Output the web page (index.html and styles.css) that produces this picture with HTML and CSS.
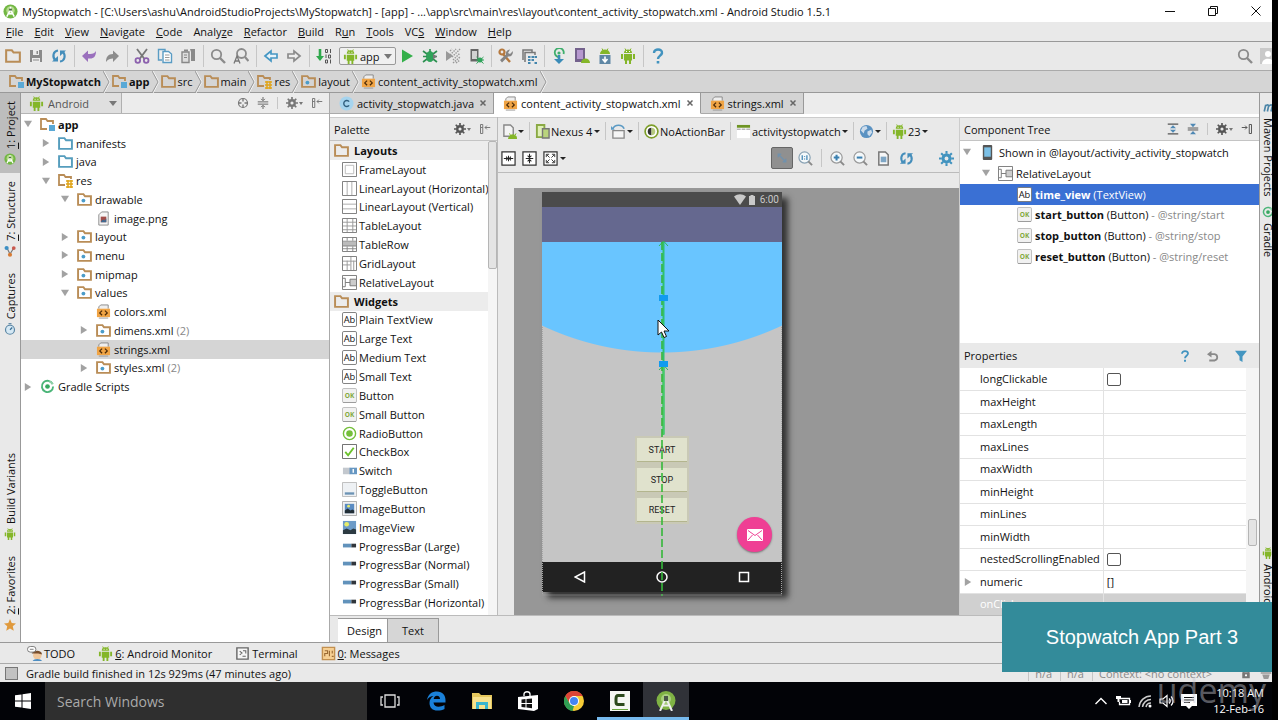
FILE: index.html
```
<!DOCTYPE html>
<html lang="en">
<head>
  <meta charset="UTF-8" />
  <meta name="viewport" content="width=device-width, initial-scale=1.0"/>
  <title>MyStopwatch - Android Studio 1.5.1</title>
  <link rel="stylesheet" href="styles.css">
</head>
<body>
  <!-- icon sprite -->
  <svg class="sprite" aria-hidden="true">
    <symbol id="folder" viewBox="1 1 14 14"><path d="M2 13V3h5l1.500 2H14v8z" fill="none" stroke="#b98d57" stroke-width="1.800"/></symbol>
    <symbol id="folder-blue" viewBox="1 1 14 14"><path d="M2 13V3h5l1.500 2H14v8z" fill="none" stroke="#559dbd" stroke-width="1.800"/></symbol>
    <symbol id="folder-mod" viewBox="1 1 15 15"><path d="M8 13H2V3h5l1.500 2H14v3" fill="none" stroke="#b98d57" stroke-width="1.800"/><path d="M10 9h6v6h-6z" fill="#5aa9d6"/></symbol>
    <symbol id="folder-res" viewBox="1 1 15 15"><path d="M8 13H2V3h5l1.500 2H14v2" fill="none" stroke="#b98d57" stroke-width="1.800"/><path d="M9 9h7M9 12h7M9 15h7M11 8v8M14 8v8" stroke="#e0a419" stroke-width="1.500"/></symbol>
    <symbol id="folder-pkg" viewBox="1 1 14 14"><path d="M2 13V3h5l1.500 2H14v8z" fill="none" stroke="#b98d57" stroke-width="1.800"/><circle cx="7" cy="9" r="1.800" fill="#4b9cc9"/></symbol>
    <symbol id="xml" viewBox="0 0 16 16"><path d="M3 5V3l2-2h8v4" fill="#eee" stroke="#888"/><path d="M1 5h14v9H1z" fill="#f0a445"/><path d="M6.500 7L4 9.500 6.500 12M9.500 7L12 9.500 9.500 12" fill="none" stroke="#4b2a08" stroke-width="1.300"/><path d="M3 15h10" stroke="#999"/></symbol>
    <symbol id="image-file" viewBox="0 0 16 16"><path d="M3 4l3-3h7v14H3z" fill="#f6f6f6" stroke="#8a8a8a"/><path d="M5 6h6v6H5z" fill="#a34e4a"/><path d="M5 12l2-3 2 1 2-2v4z" fill="#3f6a91"/></symbol>
    <symbol id="gradle" viewBox="0 0 16 16"><path d="M13.500 5.500A6 6 0 1 0 14 8" fill="none" stroke="#4bb578" stroke-width="2"/><circle cx="8" cy="8" r="2.500" fill="#36a85f"/><path d="M10 2.500a6 6 0 0 1 3.500 3" fill="none" stroke="#8fd0a8" stroke-width="2"/></symbol>
    <symbol id="android" viewBox="0 0 16 16"><g fill="#84b629"><path d="M4 5a4 3.600 0 0 1 8 0zM4 6h8v6.500H4zM1 6h2v5H1zM13 6h2v5h-2zM5 12h2v4H5zM9 12h2v4H9z"/></g><path d="M5 .5l1 2M11 .5l-1 2" stroke="#84b629"/><path d="M6 3.500h1M9 3.500h1" stroke="#fff"/></symbol>
    <symbol id="studio" viewBox="0 0 16 16"><circle cx="8" cy="8" r="7.500" fill="#72b743"/><circle cx="8" cy="7" r="4.500" fill="#b5dc8c"/><path d="M8 3v3M4 13.500L8 6l4 7.500M5.500 10.500h5" stroke="#fff" stroke-width="1.600" fill="none"/><path d="M6.500 5h3v2h-3z" fill="#4c6b42"/></symbol>
    <symbol id="gear" viewBox="0 0 16 16"><circle cx="8" cy="8" r="3.700" fill="none" stroke="currentColor" stroke-width="3.200"/><path d="M8 0v3M8 13v3M0 8h3M13 8h3M2.300 2.300l2.200 2.200M11.500 11.500l2.200 2.200M13.700 2.300l-2.200 2.200M4.500 11.500l-2.200 2.200" stroke="currentColor" stroke-width="2.200"/></symbol>
    <symbol id="hide-left" viewBox="0 0 16 16"><path d="M2 2h3v12H2zM2 6h3" fill="none" stroke="#777" stroke-width="1.300"/><path d="M15 6H8M10.500 3.500L8 6l2.500 2.500" fill="none" stroke="#777" stroke-width="1.300"/></symbol>
    <symbol id="hide-right" viewBox="0 0 16 16"><path d="M11 2h3v12h-3z" fill="none" stroke="#555" stroke-width="1.300"/><path d="M1 6h7M5.500 3.500L8 6 5.500 8.500" fill="none" stroke="#555" stroke-width="1.300"/></symbol>
    <symbol id="target" viewBox="0 0 16 16"><circle cx="8" cy="8" r="6" fill="none" stroke="#777" stroke-width="1.600"/><path d="M8 2v4M8 10v4M2 8h4M10 8h4" stroke="#777" stroke-width="1.800"/></symbol>
    <symbol id="collapse" viewBox="0 0 16 16"><path d="M1 6.500h14M1 9.500h14" stroke="#666" stroke-width="1.300"/><path d="M8 0v4M8 12v4M5.500 2.500L8 5l2.500-2.500M5.500 13.500L8 11l2.500 2.500" fill="none" stroke="#666" stroke-width="1.300"/></symbol>
    <symbol id="expand-b" viewBox="0 0 16 16"><path d="M1 1.500h14M1 14.500h14" stroke="#555" stroke-width="1.500"/><path d="M4 7l4-4 4 4zM4 9l4 4 4-4z" fill="#4f89b5"/></symbol>
    <symbol id="collapse-b" viewBox="0 0 16 16"><path d="M1 6.700h14M1 9.300h14" stroke="#555" stroke-width="1.300"/><path d="M4 1h8L8 5.500zM4 15h8l-4-4.500z" fill="#4f89b5"/></symbol>
    <symbol id="save" viewBox="0 0 16 16"><path d="M2 2h12v12H2z" fill="#8a8a8a"/><path d="M5 2h6v5H5zM4 10h8v4H4z" fill="#ececec"/><path d="M8.500 3h1.500v3H8.500zM5 11.500h6v1H5z" fill="#8a8a8a"/></symbol>
    <symbol id="sync" viewBox="0 0 16 16"><path d="M7 2.500C2 3 1 9 4.500 12.500M9 13.500C14 13 15 7 11.500 3.500" fill="none" stroke="#458ebb" stroke-width="2.200"/><path d="M1 13.500h6V8zM15 2.500H9V8z" fill="#458ebb"/></symbol>
    <symbol id="undo" viewBox="0 0 16 16"><path d="M1 8l6-5.500V6h2c3 0 5-1 6-3 0 5-2 7.500-6 7.500H7V14z" fill="#9a70bd"/></symbol>
    <symbol id="redo" viewBox="0 0 16 16"><path d="M15 8L9 2.500V6C4 6 2 9 2 14c2-3 4-3.500 7-3.500V14z" fill="#8c8c8c"/></symbol>
    <symbol id="cut" viewBox="0 0 16 16"><path d="M3 1l7.500 10M13 1L5.500 11" stroke="#777" stroke-width="1.800"/><circle cx="3.800" cy="12.500" r="2.300" fill="none" stroke="#8c61ae" stroke-width="1.800"/><circle cx="12.200" cy="12.500" r="2.300" fill="none" stroke="#8c61ae" stroke-width="1.800"/></symbol>
    <symbol id="copy" viewBox="0 0 16 16"><path d="M5 12H1.500V1.500H8V3" fill="#eee" stroke="#5a9cc4" stroke-width="1.400"/><path d="M6 3.500h5.500L14.500 6v8.500H6z" fill="#fff" stroke="#5a9cc4" stroke-width="1.400"/><path d="M8 7h4.500M8 9.500h4.500M8 12h4.500" stroke="#999"/></symbol>
    <symbol id="paste" viewBox="0 0 16 16"><path d="M2 4h7v10.500H2z" fill="#ddd" stroke="#888" stroke-width="1.400"/><path d="M4 1.500h4v2H4zM10 1h5v12h-4V4z" fill="#8a8a8a"/><path d="M4 7h3M4 9.500h3" stroke="#888"/></symbol>
    <symbol id="find" viewBox="0 0 16 16"><circle cx="6.500" cy="6.500" r="4.700" fill="none" stroke="#8b8b8b" stroke-width="1.800"/><path d="M10 10l5 5" stroke="#8b8b8b" stroke-width="2.400"/></symbol>
    <symbol id="replace" viewBox="0 0 16 16"><circle cx="8.500" cy="5.500" r="4.500" fill="none" stroke="#8b8b8b" stroke-width="1.800"/><path d="M12 9l3.500 4" stroke="#8b8b8b" stroke-width="2.200"/><path d="M1 15.500l3-7.500 3 7.500M2 13h4" fill="none" stroke="#777" stroke-width="1.300"/></symbol>
    <symbol id="arrow-back" viewBox="0 0 16 16"><path d="M2 8l6-5v3h6v4H8v3z" fill="#e7f3fa" stroke="#4597c4" stroke-width="1.700"/></symbol>
    <symbol id="arrow-fwd" viewBox="0 0 16 16"><path d="M14 8L8 3v3H2v4h6v3z" fill="#eee" stroke="#8b8b8b" stroke-width="1.700"/></symbol>
    <symbol id="make" viewBox="0 0 16 16"><path d="M4 1v9" stroke="#2fa84c" stroke-width="2.600"/><path d="M0 8h8l-4 5z" fill="#2fa84c"/><path d="M9.500 1.500h2v3h-2zM14.500 1v4M10 6.500v3.500M12.500 7h2v3h-2zM9.500 12h2v3h-2zM14.500 11.500v4" fill="none" stroke="#555"/></symbol>
    <symbol id="run" viewBox="0 0 16 16"><path d="M3 1.500L14 8 3 14.500z" fill="#34b04a"/></symbol>
    <symbol id="bug" viewBox="0 0 16 16"><ellipse cx="8" cy="8.500" rx="4" ry="5.500" fill="#2fa35a"/><path d="M1 3l4 3M1 8.500h4M1 14l4-3M15 3l-4 3M15 8.500h-4M15 14l-4-3M8 1v3" stroke="#2d8f51" stroke-width="1.600"/><path d="M11 6l4 2.500-4 3z" fill="#777"/></symbol>
    <symbol id="coverage" viewBox="0 0 16 16"><path d="M1 3l7 5-7 5z" fill="#999"/><path d="M5 3l2-2M5 7l6-6M7 9l8-8M8 12l7-7M8 15l7-6M11 15l4-3" stroke="#999" stroke-width="1.400" stroke-dasharray="1.500 1"/></symbol>
    <symbol id="attach" viewBox="0 0 16 16"><path d="M2.500 1h8v12.500h-8z" fill="#666"/><path d="M4 3h5v8H4z" fill="#d2d2d2"/><circle cx="12" cy="12" r="2.500" fill="#2fa35a"/><path d="M8.500 9l7 6.500M15.500 9l-7 6.500M8 12h8" stroke="#2fa35a"/></symbol>
    <symbol id="wrench" viewBox="0 0 16 16"><circle cx="4" cy="4" r="2.500" fill="none" stroke="#b5793e" stroke-width="2.200"/><path d="M5 6l7 8" stroke="#b5793e" stroke-width="2.400"/><path d="M15 3l-3 3-2-1 2-3.500a4 4 0 0 0-4 5L2 12l2 2.500 6-6c3 .5 5-1.500 5-5.500z" fill="#858585"/></symbol>
    <symbol id="structure" viewBox="0 0 16 16"><path d="M2 12V2h9v2M4 14V4.500h10V7" fill="none" stroke="#777" stroke-width="1.500"/><path d="M7 8h2.500v2H7zM10.500 8H13v2h-2.500zM7 11h2.500v2H7zM10.500 11H13v2h-2.500zM7 14h2.500v2H7zM13.500 14H16v2h-2.500zM13.500 8H16v2h-2.500z" fill="#4486ad"/></symbol>
    <symbol id="gradle-sync" viewBox="0 0 16 16"><path d="M12.500 6A4.500 4.500 0 1 0 9 9" fill="none" stroke="#3fae6c" stroke-width="1.800"/><circle cx="8" cy="5" r="1.600" fill="#3fae6c"/><path d="M8 7v6" stroke="#3b8cb8" stroke-width="2.600"/><path d="M3 11h10l-5 5z" fill="#3b8cb8"/></symbol>
    <symbol id="avd" viewBox="0 0 16 16"><path d="M1 0h10v14H1z" fill="#74628d"/><path d="M3 2h6v9H3z" fill="#b698cf"/><path d="M7 15a4.500 4.500 0 0 1 9 0z" fill="#84b629"/></symbol>
    <symbol id="sdk" viewBox="0 0 16 16"><path d="M3 6a5 4.500 0 0 1 10 0z" fill="#84b629"/><path d="M2.500 7h11v9h-11z" fill="#5f87a5"/><path d="M8 8.500v4M5.500 11L8 14l2.500-3" fill="none" stroke="#fff" stroke-width="1.600"/><path d="M5 .5l1 2M11 .5l-1 2" stroke="#84b629"/></symbol>
    <symbol id="help" viewBox="0 0 16 16"><path d="M4 5c0-5 8.500-4.500 8 0-.3 2.500-4 3-4 6" fill="none" stroke="#4293bf" stroke-width="2.400"/><path d="M6.700 13h2.600v2.500H6.700z" fill="#4293bf"/></symbol>
    <symbol id="user" viewBox="0 0 16 16"><path d="M0 0h16v16H0z" fill="#c9c9c9"/><circle cx="8" cy="6" r="3" fill="#fff"/><path d="M2 16c0-7 12-7 12 0z" fill="#fff"/></symbol>
    <symbol id="class" viewBox="0 0 16 16"><circle cx="8" cy="8" r="7.500" fill="#a6d4ee"/><path d="M10.800 6A3.200 3.200 0 1 0 10.800 10" fill="none" stroke="#31607f" stroke-width="1.500"/></symbol>
    <symbol id="close" viewBox="0 0 16 16"><path d="M3 3l10 10M13 3L3 13" stroke="#666" stroke-width="3"/></symbol>
    <symbol id="frame" viewBox="0 0 16 16"><path d="M.5.500h15v15H.5z" fill="#fff" stroke="#777"/><path d="M3.500 3.500h9v9h-9z" fill="none" stroke="#bbb"/></symbol>
    <symbol id="linear-h" viewBox="0 0 16 16"><path d="M.5.500h15v15H.5z" fill="#fff" stroke="#777"/><path d="M5.500 1v14M10.500 1v14" stroke="#aaa"/></symbol>
    <symbol id="linear-v" viewBox="0 0 16 16"><path d="M.5.500h15v15H.5z" fill="#fff" stroke="#777"/><path d="M1 5.500h14M1 10.500h14" stroke="#aaa"/></symbol>
    <symbol id="table" viewBox="0 0 16 16"><path d="M.5.500h15v15H.5z" fill="#fff" stroke="#777"/><path d="M1 4.500h14M1 8.500h14M1 12.500h14M5.500 1v14M11.500 1v14" stroke="#999"/></symbol>
    <symbol id="table-row" viewBox="0 0 16 16"><path d="M.5.500h15v15H.5z" fill="#fff" stroke="#777"/><path d="M1 5h14v5H1z" fill="#bbb"/><path d="M1 4.500h14M1 9.500h14M1 12.500h14M5.500 1v3M11.500 1v3M5.500 10v5M11.500 10v5" stroke="#888"/></symbol>
    <symbol id="grid" viewBox="0 0 16 16"><path d="M.5.500h15v15H.5z" fill="#fff" stroke="#777"/><path d="M1 5.500h14M1 9.500h8M5.500 5v10M9.500 1v14M12.500 5v10" stroke="#999"/></symbol>
    <symbol id="relative" viewBox="0 0 16 16"><path d="M.5.500h15v15H.5z" fill="#fff" stroke="#777"/><path d="M8.500 4.500h7v7h-7z" fill="#ccc" stroke="#777"/><path d="M1 3.500h2.500v9H1M3.500 8h5" fill="none" stroke="#777"/></symbol>
    <symbol id="ab" viewBox="0 0 16 16"><rect x=".5" y=".5" width="15" height="15" rx="1.500" fill="#fff" stroke="#777"/><text x="8" y="12" text-anchor="middle" class="ab-text">Ab</text></symbol>
    <symbol id="ok" viewBox="0 0 16 16"><rect x=".5" y=".5" width="15" height="15" rx="1.500" fill="#f1f1f1" stroke="#bbb"/><path d="M1 15.500h14" stroke="#999"/><text x="8" y="11" text-anchor="middle" class="ok-text">OK</text></symbol>
    <symbol id="radio" viewBox="0 0 16 16"><circle cx="8" cy="8" r="6.500" fill="#fff" stroke="#74bf3a" stroke-width="1.500"/><circle cx="8" cy="8" r="3.500" fill="#74bf3a"/></symbol>
    <symbol id="check" viewBox="0 0 16 16"><path d="M.5.500h15v15H.5z" fill="#fff" stroke="#666"/><path d="M3.500 8.500L6.500 12l6-8" fill="none" stroke="#6bc22c" stroke-width="2"/></symbol>
    <symbol id="switch" viewBox="0 0 16 16"><path d="M1 5h8v7H1z" fill="#c3c8ce"/><path d="M8 5h8v7H8z" fill="#6797c2"/><path d="M12 6.500v4" stroke="#fff" stroke-width="1.500"/></symbol>
    <symbol id="toggle" viewBox="0 0 16 16"><path d="M.5.500h15v15H.5z" fill="#eef1f4" stroke="#bbb"/><path d="M3 11h10v2.500H3z" fill="#6c93b5"/></symbol>
    <symbol id="image-btn" viewBox="0 0 16 16"><path d="M.5.500h15v15H.5z" fill="#f1f1f1" stroke="#aaa"/><path d="M3 3h10v10H3z" fill="#5a8bc2"/><path d="M3 13v-3l3-2 3 2 2-1 2 1v3z" fill="#222e36"/><circle cx="7" cy="5.500" r="1.500" fill="#e5ec6a"/></symbol>
    <symbol id="image-view" viewBox="0 0 16 16"><path d="M1 1h14v14H1z" fill="#6c9bc8"/><path d="M1 15v-4l4-2 4 2 3-2 3 1v5z" fill="#2c3a42"/><circle cx="5" cy="4.500" r="2.500" fill="#e5ec6a"/></symbol>
    <symbol id="progress" viewBox="0 0 16 16"><path d="M1 5h9v4H1z" fill="#6192bb"/><path d="M10 5h5v4h-5z" fill="#30363c"/></symbol>
    <symbol id="new-config" viewBox="0 0 16 16"><path d="M2 1h7l3 3v9H2z" fill="#f4f4f4" stroke="#888" stroke-width="1.500"/><path d="M7 16a4.500 4.500 0 0 1 9 0zM8 10l1 2M15 10l-1 2" fill="#84b629" stroke="#84b629"/></symbol>
    <symbol id="device" viewBox="0 0 16 16"><path d="M2 1h8v13H2z" fill="#dff0b6" stroke="#8aa944" stroke-width="2"/><path d="M8 5h7v10H8z" fill="#b9d47c" stroke="#777" stroke-width="1.500"/></symbol>
    <symbol id="rotate" viewBox="0 0 16 16"><path d="M2 7h12v8H2z" fill="#f5f5f5" stroke="#888" stroke-width="1.400"/><path d="M2 5c2-5 10-5 12 0" fill="none" stroke="#5b9ac4" stroke-width="1.700"/><path d="M0 2v4h4z" fill="#5b9ac4"/></symbol>
    <symbol id="theme" viewBox="0 0 16 16"><circle cx="8" cy="8" r="6.800" fill="#fff" stroke="#7d9e29" stroke-width="1.800"/><path d="M8 4a4 4 0 0 0 0 8z" fill="#333"/><path d="M8 4a4 4 0 0 1 0 8z" fill="#b5c97f"/></symbol>
    <symbol id="activity" viewBox="0 0 16 16"><path d="M1 1h14v14H1z" fill="#fff"/><path d="M1 1h14v3H1z" fill="#6e9423"/><path d="M1 5.500h4M6 5.500h4M11 5.500h4" stroke="#888"/></symbol>
    <symbol id="globe" viewBox="0 0 16 16"><circle cx="8" cy="8" r="7" fill="#5a92c2"/><path d="M4 3l4-1 1 3-3 2-1 3-3-3zM9 8l4-2 1 3-3 4-2-2z" fill="#cddceb"/></symbol>
    <symbol id="fit-h" viewBox="0 0 16 16"><path d="M1 1h14v14H1z" fill="#fff" stroke="#333" stroke-width="1.300"/><path d="M3 8h4M13 8H9M5.500 6L7 8l-1.500 2M10.500 6L9 8l1.500 2M8 5v6" fill="none" stroke="#222" stroke-width="1.100"/></symbol>
    <symbol id="fit-v" viewBox="0 0 16 16"><path d="M1 1h14v14H1z" fill="#fff" stroke="#333" stroke-width="1.300"/><path d="M8 3v4M8 13V9M6 5l2 2 2-2M6 11l2-2 2 2M4 8h8" fill="none" stroke="#222" stroke-width="1.100"/></symbol>
    <symbol id="fit-all" viewBox="0 0 16 16"><path d="M1 1h14v14H1z" fill="#fff" stroke="#333" stroke-width="1.300"/><path d="M3.500 6.500v-3h3M9.500 3.500h3v3M12.500 9.500v3h-3M6.500 12.500h-3v-3M4 4l3 3M12 4L9 7M12 12L9 9M4 12l3-3" fill="none" stroke="#333"/></symbol>
    <symbol id="zoom-fit" viewBox="0 0 16 16"><path d="M3 7V3h4M9 13h4V9M4 4l8 8" fill="none" stroke="#7191ac" stroke-width="1.800"/></symbol>
    <symbol id="zoom-actual" viewBox="0 0 16 16"><circle cx="7" cy="7" r="6" fill="#f4f8fa" stroke="#8aa3b5" stroke-width="1.300"/><path d="M11 11l4 4" stroke="#8a8a8a" stroke-width="2"/><path d="M4.500 4.500v5M9.500 4.500v5M7 5.500v1M7 8v1" stroke="#3b80b0" stroke-width="1.300"/></symbol>
    <symbol id="zoom-in" viewBox="0 0 16 16"><circle cx="7" cy="7" r="6" fill="#f4f8fa" stroke="#999" stroke-width="1.300"/><path d="M11 11l4 4" stroke="#8a8a8a" stroke-width="2"/><path d="M4 7h6M7 4v6" stroke="#3b80b0" stroke-width="2.200"/></symbol>
    <symbol id="zoom-out" viewBox="0 0 16 16"><circle cx="7" cy="7" r="6" fill="#f4f8fa" stroke="#999" stroke-width="1.300"/><path d="M11 11l4 4" stroke="#8a8a8a" stroke-width="2"/><path d="M4 7h6" stroke="#3b80b0" stroke-width="2.200"/></symbol>
    <symbol id="page" viewBox="0 0 16 16"><path d="M3 1h7l3 3v11H3z" fill="#f7f7f7" stroke="#777" stroke-width="1.600"/><path d="M5 6h6v6H5z" fill="#7ea6c5"/></symbol>
    <symbol id="phone" viewBox="0 0 16 16"><rect x="3" width="10" height="16" rx="1" fill="#555"/><path d="M4.500 2.500h7v10h-7z" fill="#7cc0e6"/></symbol>
    <symbol id="reset" viewBox="0 0 16 16"><path d="M3 14h7a4.300 4.300 0 0 0 0-8.500H5" fill="none" stroke="#8a8a8a" stroke-width="2.400"/><path d="M0 5.500L6 1v9z" fill="#8a8a8a"/></symbol>
    <symbol id="filter" viewBox="0 0 16 16"><path d="M0 1h16L10 8.500V16l-4-2.500v-5z" fill="#4496c1"/></symbol>
    <symbol id="structure-tool" viewBox="0 0 16 16"><path d="M4 4l4 8 5-8" fill="none" stroke="#777" stroke-width="1.500"/><circle cx="3.500" cy="4" r="2.800" fill="#3d8fc4"/><circle cx="13" cy="4" r="2.500" fill="#c9584d"/><circle cx="8" cy="13" r="2.800" fill="#d67b34"/></symbol>
    <symbol id="captures" viewBox="0 0 16 16"><circle cx="8" cy="9" r="6" fill="#d5e8f4" stroke="#5a86a4" stroke-width="1.600"/><path d="M8 9l3-3M6 1h4" stroke="#3b6f94" stroke-width="1.600"/></symbol>
    <symbol id="star" viewBox="0 0 16 16"><path d="M8 0l2.300 5.400 5.700.5-4.300 3.900 1.300 5.700L8 12.500l-5 3 1.300-5.700L0 5.900l5.700-.5z" fill="#e09a3d"/></symbol>
    <symbol id="todo" viewBox="0 0 16 16"><circle cx="11" cy="10" r="4.500" fill="#f0c79c"/><path d="M5 8c2-4 11-4 11 1l-4-1z" fill="#7a4f2c"/><path d="M6 16c1-3 9-3 10 0z" fill="#4d8ec2"/><rect x=".5" y=".5" width="9" height="6" rx="3" fill="#fff" stroke="#777"/><path d="M3 3.500h4" stroke="#777"/></symbol>
    <symbol id="terminal" viewBox="0 0 16 16"><path d="M2 2h12v12H2z" fill="#f6f6f6" stroke="#666" stroke-width="1.500"/><path d="M5 5.500l2.500 2L5 9.500M8 11h3.500M8.500 5h3v3" fill="none" stroke="#666" stroke-width="1.100"/></symbol>
    <symbol id="messages" viewBox="0 0 16 16"><path d="M1.500 1.500h13v13h-13z" fill="#f6cf93" stroke="#c29050" stroke-width="1.500"/><path d="M4 5h3v3H4v3M9 5v6M12 5v3M11.500 11h2" fill="none" stroke="#9a6a34" stroke-width="1.200"/></symbol>
    <symbol id="maven" viewBox="0 0 16 16"><path d="M3 14l2-9M4.500 7c3-3 5-2 4 1l-1.300 6M9 7c3-3 5-2 4.500 1L12 14" fill="none" stroke="#4c86a8" stroke-width="2.200"/></symbol>
    <symbol id="lock" viewBox="0 0 16 16"><path d="M5 8V5a3 3 0 0 1 6 0v3" fill="none" stroke="#777" stroke-width="1.600"/><path d="M3 7h10v8H3z" fill="#777"/><circle cx="8" cy="11" r="1.500" fill="#fff"/></symbol>
    <symbol id="hector" viewBox="0 0 16 16"><path d="M3 6c1-6 9-6 10 0zM1 7h14v2H1zM3 10h10l-2 6H5z" fill="#999"/></symbol>
    <symbol id="arrow-open" viewBox="0 0 10 10"><path d="M0 1h10L5 9z" fill="#a2a2a2"/></symbol>
    <symbol id="arrow-closed" viewBox="0 0 10 10"><path d="M1 0l8 5-8 5z" fill="#a2a2a2"/></symbol>
    <symbol id="chevron" viewBox="0 0 8 22"><path d="M1 0l6 11-6 11" fill="none" stroke="#f5f5f5"/><path d="M0 0l6 11-6 11" fill="none" stroke="#999"/></symbol>
  </svg>

  <div class="screen">
    <header class="titlebar">
      <svg class="icon"><use href="#studio"/></svg>
      <h1>MyStopwatch - [C:\Users\ashu\AndroidStudioProjects\MyStopwatch] - [app] - ...\app\src\main\res\layout\content_activity_stopwatch.xml - Android Studio 1.5.1</h1>
      <div class="window-controls">
        <button aria-label="Minimize"><svg viewBox="0 0 12 12"><path d="M1 6.500h10" stroke="#111"/></svg></button>
        <button aria-label="Restore"><svg viewBox="0 0 12 12"><path d="M1.500 3.500h7v7h-7zM3.500 3.500v-2h7v7h-2" fill="none" stroke="#111"/></svg></button>
        <button aria-label="Close"><svg viewBox="0 0 12 12"><path d="M1.500 1.500l9 9M10.500 1.500l-9 9" stroke="#111"/></svg></button>
      </div>
    </header>

    <nav class="menubar">
      <button><u>F</u>ile</button>
      <button><u>E</u>dit</button>
      <button><u>V</u>iew</button>
      <button><u>N</u>avigate</button>
      <button><u>C</u>ode</button>
      <button>Analy<u>z</u>e</button>
      <button><u>R</u>efactor</button>
      <button><u>B</u>uild</button>
      <button>R<u>u</u>n</button>
      <button><u>T</u>ools</button>
      <button>VC<u>S</u></button>
      <button><u>W</u>indow</button>
      <button><u>H</u>elp</button>
    </nav>

    <div class="toolbar">
      <button aria-label="Open"><svg class="icon"><use href="#folder"/></svg></button>
      <button aria-label="Save All"><svg class="icon"><use href="#save"/></svg></button>
      <button aria-label="Synchronize"><svg class="icon"><use href="#sync"/></svg></button>
      <span class="sep"></span>
      <button aria-label="Undo"><svg class="icon"><use href="#undo"/></svg></button>
      <button aria-label="Redo"><svg class="icon"><use href="#redo"/></svg></button>
      <span class="sep"></span>
      <button aria-label="Cut"><svg class="icon"><use href="#cut"/></svg></button>
      <button aria-label="Copy"><svg class="icon"><use href="#copy"/></svg></button>
      <button aria-label="Paste"><svg class="icon"><use href="#paste"/></svg></button>
      <span class="sep"></span>
      <button aria-label="Find"><svg class="icon"><use href="#find"/></svg></button>
      <button aria-label="Replace"><svg class="icon"><use href="#replace"/></svg></button>
      <span class="sep"></span>
      <button aria-label="Back"><svg class="icon"><use href="#arrow-back"/></svg></button>
      <button aria-label="Forward"><svg class="icon"><use href="#arrow-fwd"/></svg></button>
      <span class="sep"></span>
      <button aria-label="Make Project"><svg class="icon"><use href="#make"/></svg></button>
      <label class="run-config">
        <svg class="icon"><use href="#android"/></svg>
        <select aria-label="Run configuration"><option>app</option></select>
        <span class="caret"></span>
      </label>
      <button aria-label="Run"><svg class="icon"><use href="#run"/></svg></button>
      <button aria-label="Debug"><svg class="icon"><use href="#bug"/></svg></button>
      <button aria-label="Run with Coverage"><svg class="icon"><use href="#coverage"/></svg></button>
      <button aria-label="Attach debugger"><svg class="icon"><use href="#attach"/></svg></button>
      <span class="sep"></span>
      <button aria-label="Settings"><svg class="icon"><use href="#wrench"/></svg></button>
      <button aria-label="Project Structure"><svg class="icon"><use href="#structure"/></svg></button>
      <span class="sep"></span>
      <button aria-label="Sync Gradle"><svg class="icon"><use href="#gradle-sync"/></svg></button>
      <button aria-label="AVD Manager"><svg class="icon"><use href="#avd"/></svg></button>
      <button aria-label="SDK Manager"><svg class="icon"><use href="#sdk"/></svg></button>
      <button aria-label="Device Monitor"><svg class="icon"><use href="#android"/></svg></button>
      <span class="sep"></span>
      <button aria-label="Help"><svg class="icon"><use href="#help"/></svg></button>
      <span class="spacer"></span>
      <button aria-label="Search Everywhere"><svg class="icon"><use href="#find"/></svg></button>
      <button class="user" aria-label="User"><svg class="icon"><use href="#user"/></svg></button>
    </div>

    <nav class="breadcrumbs">
      <a href="#" class="bold"><svg class="icon"><use href="#folder-mod"/></svg>MyStopwatch</a><svg class="chevron"><use href="#chevron"/></svg>
      <a href="#" class="bold"><svg class="icon"><use href="#folder-mod"/></svg>app</a><svg class="chevron"><use href="#chevron"/></svg>
      <a href="#"><svg class="icon"><use href="#folder"/></svg>src</a><svg class="chevron"><use href="#chevron"/></svg>
      <a href="#"><svg class="icon"><use href="#folder"/></svg>main</a><svg class="chevron"><use href="#chevron"/></svg>
      <a href="#"><svg class="icon"><use href="#folder-res"/></svg>res</a><svg class="chevron"><use href="#chevron"/></svg>
      <a href="#"><svg class="icon"><use href="#folder-pkg"/></svg>layout</a><svg class="chevron"><use href="#chevron"/></svg>
      <a href="#"><svg class="icon"><use href="#xml"/></svg>content_activity_stopwatch.xml</a><svg class="chevron"><use href="#chevron"/></svg>
    </nav>

    <main class="workspace">
      <aside class="stripe stripe-left">
        <button class="active"><span><u>1</u>: Project</span><svg class="icon"><use href="#studio"/></svg></button>
        <button><span><u>7</u>: Structure</span><svg class="icon"><use href="#structure-tool"/></svg></button>
        <button><span>Captures</span><svg class="icon"><use href="#captures"/></svg></button>
        <span class="spacer"></span>
        <button><span>Build Variants</span><svg class="icon"><use href="#android"/></svg></button>
        <button><span><u>2</u>: Favorites</span><svg class="icon"><use href="#star"/></svg></button>
      </aside>

      <section class="project">
        <div class="project-head">
          <label class="view-select">
            <svg class="icon"><use href="#android"/></svg>
            <select aria-label="Project view"><option>Android</option></select>
            <span class="caret"></span>
          </label>
          <div class="head-tools">
            <button aria-label="Scroll from source"><svg class="icon-sm"><use href="#target"/></svg></button>
            <button aria-label="Collapse all"><svg class="icon-sm"><use href="#collapse"/></svg></button>
            <span class="sep"></span>
            <button aria-label="Options"><svg class="icon-sm"><use href="#gear"/></svg><span class="caret-sm"></span></button>
            <button aria-label="Hide"><svg class="icon-sm"><use href="#hide-left"/></svg></button>
          </div>
        </div>
        <ul class="tree project-tree">
          <li class="lv0 bold"><svg class="tw"><use href="#arrow-open"/></svg><svg class="icon"><use href="#folder-mod"/></svg>app</li>
          <li class="lv1"><svg class="tw"><use href="#arrow-closed"/></svg><svg class="icon"><use href="#folder-blue"/></svg>manifests</li>
          <li class="lv1"><svg class="tw"><use href="#arrow-closed"/></svg><svg class="icon"><use href="#folder-blue"/></svg>java</li>
          <li class="lv1"><svg class="tw"><use href="#arrow-open"/></svg><svg class="icon"><use href="#folder-res"/></svg>res</li>
          <li class="lv2"><svg class="tw"><use href="#arrow-open"/></svg><svg class="icon"><use href="#folder-pkg"/></svg>drawable</li>
          <li class="lv3"><span class="tw"></span><svg class="icon"><use href="#image-file"/></svg>image.png</li>
          <li class="lv2"><svg class="tw"><use href="#arrow-closed"/></svg><svg class="icon"><use href="#folder-pkg"/></svg>layout</li>
          <li class="lv2"><svg class="tw"><use href="#arrow-closed"/></svg><svg class="icon"><use href="#folder-pkg"/></svg>menu</li>
          <li class="lv2"><svg class="tw"><use href="#arrow-closed"/></svg><svg class="icon"><use href="#folder-pkg"/></svg>mipmap</li>
          <li class="lv2"><svg class="tw"><use href="#arrow-open"/></svg><svg class="icon"><use href="#folder-pkg"/></svg>values</li>
          <li class="lv3"><span class="tw"></span><svg class="icon"><use href="#xml"/></svg>colors.xml</li>
          <li class="lv3"><svg class="tw"><use href="#arrow-closed"/></svg><svg class="icon"><use href="#folder-pkg"/></svg>dimens.xml <span class="dim">(2)</span></li>
          <li class="lv3 current"><span class="tw"></span><svg class="icon"><use href="#xml"/></svg>strings.xml</li>
          <li class="lv3"><svg class="tw"><use href="#arrow-closed"/></svg><svg class="icon"><use href="#folder-pkg"/></svg>styles.xml <span class="dim">(2)</span></li>
          <li class="lv0"><svg class="tw"><use href="#arrow-closed"/></svg><svg class="icon"><use href="#gradle"/></svg>Gradle Scripts</li>
        </ul>
      </section>

      <section class="editor">
        <div class="file-tabs">
          <button><svg class="icon"><use href="#class"/></svg>activity_stopwatch.java<svg class="close"><use href="#close"/></svg></button>
          <button class="active"><svg class="icon"><use href="#xml"/></svg>content_activity_stopwatch.xml<svg class="close"><use href="#close"/></svg></button>
          <button><svg class="icon"><use href="#xml"/></svg>strings.xml<svg class="close"><use href="#close"/></svg></button>
        </div>

        <div class="designer">
          <section class="palette">
            <div class="panel-head">
              <h2>Palette</h2>
              <button aria-label="Options"><svg class="icon-sm"><use href="#gear"/></svg><span class="caret-sm"></span></button>
              <button aria-label="Hide"><svg class="icon-sm"><use href="#hide-left"/></svg></button>
            </div>
            <div class="palette-body">
              <ul class="palette-list">
                <li class="group"><svg class="icon"><use href="#folder"/></svg>Layouts</li>
                <li><svg class="icon"><use href="#frame"/></svg>FrameLayout</li>
                <li><svg class="icon"><use href="#linear-h"/></svg>LinearLayout (Horizontal)</li>
                <li><svg class="icon"><use href="#linear-v"/></svg>LinearLayout (Vertical)</li>
                <li><svg class="icon"><use href="#table"/></svg>TableLayout</li>
                <li><svg class="icon"><use href="#table-row"/></svg>TableRow</li>
                <li><svg class="icon"><use href="#grid"/></svg>GridLayout</li>
                <li><svg class="icon"><use href="#relative"/></svg>RelativeLayout</li>
                <li class="group"><svg class="icon"><use href="#folder"/></svg>Widgets</li>
                <li><svg class="icon"><use href="#ab"/></svg>Plain TextView</li>
                <li><svg class="icon"><use href="#ab"/></svg>Large Text</li>
                <li><svg class="icon"><use href="#ab"/></svg>Medium Text</li>
                <li><svg class="icon"><use href="#ab"/></svg>Small Text</li>
                <li><svg class="icon"><use href="#ok"/></svg>Button</li>
                <li><svg class="icon"><use href="#ok"/></svg>Small Button</li>
                <li><svg class="icon"><use href="#radio"/></svg>RadioButton</li>
                <li><svg class="icon"><use href="#check"/></svg>CheckBox</li>
                <li><svg class="icon"><use href="#switch"/></svg>Switch</li>
                <li><svg class="icon"><use href="#toggle"/></svg>ToggleButton</li>
                <li><svg class="icon"><use href="#image-btn"/></svg>ImageButton</li>
                <li><svg class="icon"><use href="#image-view"/></svg>ImageView</li>
                <li><svg class="icon"><use href="#progress"/></svg>ProgressBar (Large)</li>
                <li><svg class="icon"><use href="#progress"/></svg>ProgressBar (Normal)</li>
                <li><svg class="icon"><use href="#progress"/></svg>ProgressBar (Small)</li>
                <li><svg class="icon"><use href="#progress"/></svg>ProgressBar (Horizontal)</li>
              </ul>
              <div class="scrollbar"><div class="thumb palette-thumb"></div></div>
            </div>
          </section>

          <section class="preview">
            <div class="config-bar">
              <button aria-label="Configuration"><svg class="icon"><use href="#new-config"/></svg><span class="caret-dark"></span></button>
              <span class="sep"></span>
              <label><svg class="icon"><use href="#device"/></svg><select aria-label="Device"><option>Nexus 4</option></select><span class="caret-dark"></span></label>
              <span class="sep"></span>
              <button aria-label="Orientation"><svg class="icon"><use href="#rotate"/></svg><span class="caret-dark"></span></button>
              <span class="sep"></span>
              <button><svg class="icon"><use href="#theme"/></svg>NoActionBar</button>
              <span class="sep"></span>
              <label><svg class="icon"><use href="#activity"/></svg><select aria-label="Activity"><option>activitystopwatch</option></select><span class="caret-dark"></span></label>
              <span class="sep"></span>
              <button aria-label="Locale"><svg class="icon"><use href="#globe"/></svg><span class="caret-dark"></span></button>
              <span class="sep"></span>
              <label><svg class="icon"><use href="#android"/></svg><select aria-label="API level"><option>23</option></select><span class="caret-dark"></span></label>
            </div>
            <div class="zoom-bar">
              <div class="fit-tools">
                <button aria-label="Toggle width"><svg class="icon"><use href="#fit-h"/></svg></button>
                <button aria-label="Toggle height"><svg class="icon"><use href="#fit-v"/></svg></button>
                <button aria-label="Expand"><svg class="icon"><use href="#fit-all"/></svg><span class="caret-dark"></span></button>
              </div>
              <div class="zoom-tools">
                <button class="pressed" aria-label="Zoom to fit"><svg class="icon-sm"><use href="#zoom-fit"/></svg></button>
                <button aria-label="Actual size"><svg class="icon"><use href="#zoom-actual"/></svg></button>
                <span class="sep"></span>
                <button aria-label="Zoom in"><svg class="icon"><use href="#zoom-in"/></svg></button>
                <button aria-label="Zoom out"><svg class="icon"><use href="#zoom-out"/></svg></button>
                <button aria-label="Jump to source"><svg class="icon"><use href="#page"/></svg></button>
                <button aria-label="Refresh"><svg class="icon"><use href="#sync"/></svg></button>
                <button class="settings" aria-label="Settings"><svg class="icon"><use href="#gear"/></svg></button>
              </div>
            </div>
            <div class="canvas-wrap">
              <div class="canvas">
                <div class="phone">
                  <div class="phone-status">
                    <svg viewBox="0 0 22 12"><path d="M0 2.500c4-3 8-3 12 0L6 11z" fill="#c9c9c9"/><path d="M15 2h1.500V1h3v1H21v9h-6z" fill="#c9c9c9"/></svg>
                    6:00
                  </div>
                  <div class="phone-appbar"></div>
                  <div class="phone-content">
                    <div class="phone-buttons">
                      <button>START</button>
                      <button>STOP</button>
                      <button>RESET</button>
                    </div>
                    <button class="fab" aria-label="Mail"><svg viewBox="0 0 16 12"><rect width="16" height="12" rx="1" fill="#fff"/><path d="M1 1.500l7 5 7-5M1 11l4.500-5M15 11l-4.500-5" fill="none" stroke="#ef3f94"/></svg></button>
                  </div>
                  <div class="phone-nav">
                    <svg viewBox="0 0 12 12"><path d="M10.500 1v10L1 6z"/></svg>
                    <svg viewBox="0 0 12 12"><circle cx="6" cy="6" r="5"/></svg>
                    <svg viewBox="0 0 12 12"><path d="M1.500 1.500h9v9h-9z"/></svg>
                  </div>
                  <!-- selection guides drawn over the device -->
                  <svg class="guides" viewBox="0 0 240 404">
                    <path d="M121.500 50v192" stroke="#2fc070" stroke-width="2"/>
                    <path d="M121.500 175v68" stroke="#45c967" stroke-width="2"/>
                    <path d="M117 54l4.500-5 4.500 5M117 178l4.500-5 4.500 5" fill="none" stroke="#2eb85c"/>
                    <path d="M119 60v180" stroke="#9fdcc0" stroke-dasharray="2 9"/>
                    <path d="M120 50v354" stroke="#35b83a" stroke-width="2" stroke-dasharray="8 3" opacity=".8"/>
                    <path d="M117 103h9v6h-9zM117 169h9v6h-9z" fill="#119bf0"/>
                    <path d="M.5 135v268h239V135" fill="none" stroke="#a5a5a5" stroke-dasharray="1 1"/>
                    <path d="M116 128v15l3.500-3 2.500 5.500 2.500-1-2.500-5.500h5z" fill="#fff" stroke="#111"/>
                  </svg>
                </div>
              </div>
            </div>
          </section>

          <section class="inspector">
            <div class="panel-head">
              <h2>Component Tree</h2>
              <button aria-label="Expand all"><svg class="icon-sm"><use href="#expand-b"/></svg></button>
              <button aria-label="Collapse all"><svg class="icon-sm"><use href="#collapse-b"/></svg></button>
              <span class="sep"></span>
              <button aria-label="Options"><svg class="icon-sm"><use href="#gear"/></svg><span class="caret-sm"></span></button>
              <button aria-label="Hide"><svg class="icon-sm"><use href="#hide-right"/></svg></button>
            </div>
            <div class="component-body">
              <ul class="tree component-tree">
                <li class="lv0"><svg class="tw"><use href="#arrow-open"/></svg><svg class="icon"><use href="#phone"/></svg>Shown in @layout/activity_activity_stopwatch</li>
                <li class="lv1"><svg class="tw"><use href="#arrow-open"/></svg><svg class="icon"><use href="#relative"/></svg>RelativeLayout</li>
                <li class="lv2 selected"><span class="tw"></span><svg class="icon"><use href="#ab"/></svg><span><b>time_view</b> (TextView)</span></li>
                <li class="lv2"><span class="tw"></span><svg class="icon"><use href="#ok"/></svg><span><b>start_button</b> (Button) <span class="dim">- @string/start</span></span></li>
                <li class="lv2"><span class="tw"></span><svg class="icon"><use href="#ok"/></svg><span><b>stop_button</b> (Button) <span class="dim">- @string/stop</span></span></li>
                <li class="lv2"><span class="tw"></span><svg class="icon"><use href="#ok"/></svg><span><b>reset_button</b> (Button) <span class="dim">- @string/reset</span></span></li>
              </ul>
            </div>
            <div class="panel-head props-head">
              <h2>Properties</h2>
              <button aria-label="Help"><svg class="icon-sm"><use href="#help"/></svg></button>
              <button aria-label="Restore default"><svg class="icon-sm"><use href="#reset"/></svg></button>
              <button aria-label="Show expert properties"><svg class="icon-sm"><use href="#filter"/></svg></button>
            </div>
            <div class="props-body">
              <table class="props">
                <tr><th scope="row"><label for="longClickable">longClickable</label></th><td><input type="checkbox" id="longClickable"></td></tr>
                <tr><th scope="row">maxHeight</th><td></td></tr>
                <tr><th scope="row">maxLength</th><td></td></tr>
                <tr><th scope="row">maxLines</th><td></td></tr>
                <tr><th scope="row">maxWidth</th><td></td></tr>
                <tr><th scope="row">minHeight</th><td></td></tr>
                <tr><th scope="row">minLines</th><td></td></tr>
                <tr><th scope="row">minWidth</th><td></td></tr>
                <tr><th scope="row"><label for="nestedScrolling">nestedScrollingEnabled</label></th><td><input type="checkbox" id="nestedScrolling"></td></tr>
                <tr class="expandable"><th scope="row"><svg class="tw"><use href="#arrow-closed"/></svg>numeric</th><td>[]</td></tr>
                <tr class="picked"><th scope="row">onClick</th><td></td></tr>
              </table>
              <div class="scrollbar"><div class="thumb props-thumb"></div></div>
            </div>
          </section>
        </div>

        <div class="mode-tabs">
          <button class="active">Design</button>
          <button>Text</button>
        </div>
      </section>

      <aside class="stripe stripe-right">
        <button><svg class="icon"><use href="#maven"/></svg><span>Maven Projects</span></button>
        <button><svg class="icon"><use href="#gradle"/></svg><span>Gradle</span></button>
        <span class="spacer"></span>
        <button><svg class="icon"><use href="#android"/></svg><span>Android Model</span></button>
      </aside>
    </main>

    <div class="tool-windows">
      <button><svg class="icon"><use href="#todo"/></svg>TODO</button>
      <button><svg class="icon"><use href="#android"/></svg><span><u>6</u>: Android Monitor</span></button>
      <button><svg class="icon"><use href="#terminal"/></svg>Terminal</button>
      <button><svg class="icon"><use href="#messages"/></svg><span><u>0</u>: Messages</span></button>
    </div>

    <footer class="statusbar">
      <span class="status-box"></span>
      <span>Gradle build finished in 12s 929ms (47 minutes ago)</span>
      <span class="spacer"></span>
      <span class="cell">n/a</span>
      <span class="cell">n/a</span>
      <span class="cell context">Context: &lt;no context&gt;</span>
      <svg class="icon-sm"><use href="#lock"/></svg>
      <svg class="icon-sm"><use href="#hector"/></svg>
    </footer>

    <div class="taskbar">
      <button class="start" aria-label="Start"><svg viewBox="0 0 16 16"><path d="M0 2.300L6.500 1.400v6H0zM7.500 1.200L16 0v7.400H7.500zM0 8.500h6.500v6L0 13.700zM7.500 8.500H16V16l-8.500-1.200z" fill="#fff"/></svg></button>
      <input class="search" type="text" placeholder="Search Windows" aria-label="Search Windows">
      <div class="apps">
        <button aria-label="Task view"><svg viewBox="0 0 20 20"><path d="M5 4h10v12H5zM3 6H1v8h2M17 6h2v8h-2" fill="none" stroke="#ddd" stroke-width="1.300"/></svg></button>
        <button aria-label="Edge"><svg viewBox="0 0 20 20"><path d="M1 9C2 3 6 .5 11 .5c5.500 0 8.500 4 8.500 8.500v2.500H7.500c.3 3 2.500 4.300 5 4.300 2.200 0 4-.5 6-1.700v4c-2 1-4.300 1.500-7 1.500C6.500 19.600 3.500 16.500 3.500 12c0-3 1.500-5.500 4-7C5 5 2.500 6.500 1 9zm6.700-1H14c0-2-1-3.300-3-3.300S8 6 7.700 8z" fill="#1a80d8"/></svg></button>
        <button aria-label="File Explorer"><svg viewBox="0 0 20 20"><path d="M0 2h7l2 2h11v14H0z" fill="#e5c75d"/><path d="M1 6h18v12H1z" fill="#f7e18e"/><path d="M4 18v-7h12v7h-3v-4H7v4z" fill="#39b5cf"/></svg></button>
        <button aria-label="Store"><svg viewBox="0 0 20 20"><path d="M0 6l20-2v14l-4 2L0 18z" fill="#fff"/><path d="M6 5V3c0-3 6-3 6 0v2" fill="none" stroke="#fff" stroke-width="1.300"/><path d="M3.500 8.500l4-.4v3.800h-4zM8.500 8l5.500-.5v4.400H8.500zM3.500 13h4v3.500l-4-.4zM8.500 13H14v4.200l-5.500-.6z" fill="#111"/></svg></button>
        <button aria-label="Chrome"><svg viewBox="0 0 20 20"><circle cx="10" cy="10" r="10" fill="#f6cc36"/><path d="M1.300 5A10 10 0 0 1 18.700 5H10L5.700 12.500z" fill="#dc4437"/><path d="M1.300 5l4.400 7.500L10 15l-1.500 5A10 10 0 0 1 1.300 5z" fill="#2f9e54"/><circle cx="10" cy="10" r="5" fill="#fff"/><circle cx="10" cy="10" r="4" fill="#4384f3"/></svg></button>
        <button class="running" aria-label="Camtasia"><svg viewBox="0 0 20 20"><path d="M0 0h20v20H0z" fill="#f5f7f3"/><path d="M14.500 4.500H8C6.500 4.500 6 6 6 8v3c0 2 1 2.500 2 2.500h6.500" fill="none" stroke="#2c4a1c" stroke-width="3"/><path d="M2 18.500h16" stroke="#6aa73c"/></svg></button>
        <button class="running focused" aria-label="Android Studio"><svg viewBox="0 0 20 20"><circle cx="10" cy="9.500" r="9.500" fill="#7fb244"/><circle cx="10" cy="8" r="5" fill="#a9cf7e"/><path d="M4 20l6-13 6 13M6.500 14.500h7" fill="none" stroke="#eee" stroke-width="2"/><path d="M8 5h4v5H8z" fill="#4a5748"/></svg></button>
      </div>
      <span class="spacer"></span>
      <div class="tray">
        <svg viewBox="0 0 16 16"><path d="M2.500 11L8 5.500l5.500 5.500" fill="none" stroke="#fff" stroke-width="1.400"/></svg>
        <svg viewBox="0 0 16 16"><path d="M5 5.500h9.500v6H4.500V9M15.500 7v3" fill="none" stroke="#fff" stroke-width="1.300"/><path d="M7 7h5.500v3H7zM1 3h5v3H4.500v3h-2V6H1z" fill="#fff"/></svg>
        <svg viewBox="0 0 16 16"><path d="M2 14A12 12 0 0 1 14 3M5.500 14A8.500 8.500 0 0 1 14 6.500M9 14a5 5 0 0 1 5-4" fill="none" stroke="#ccc" stroke-width="1.500"/><circle cx="13" cy="13" r="1.500" fill="#fff"/></svg>
        <svg viewBox="0 0 16 16"><path d="M1 6h3l4-3.500v11L4 10H1z" fill="none" stroke="#fff" stroke-width="1.200"/><path d="M10 5.500c1.500 1.500 1.500 3.500 0 5M12 3.500c2.700 2.500 2.700 6.500 0 9" fill="none" stroke="#fff" stroke-width="1.200"/></svg>
        <svg viewBox="0 0 16 16"><path d="M0 1h16v12h-5l-3 3-3-3H0z" fill="#fff"/><path d="M3 4.500h10M3 7h10M3 9.500h6" stroke="#111"/></svg>
        <time>10:18 AM<br>12-Feb-16</time>
      </div>
    </div>
  </div>

  <div class="lesson-banner">Stopwatch App Part 3</div>
  <div class="watermark">udemy</div>
</body>
</html>
```
FILE: styles.css
```
* { box-sizing: border-box; }
body { margin: 0; padding-right: 6px; background: #000; color: #111; font: 11px "Open Sans", "Noto Sans", sans-serif; position: relative; overflow: hidden; }
h1, h2, ul { margin: 0; padding: 0; font-size: 11px; list-style: none; }
button, select, input { font: inherit; color: inherit; border: 0; padding: 0; margin: 0; background: none; }
button { display: flex; align-items: center; white-space: nowrap; }
select { appearance: none; outline: none; }
a { color: inherit; text-decoration: none; }
u { text-underline-offset: 1px; }
.sprite { display: none; }
.spacer { flex: 1; }
.bold { font-weight: bold; }
.dim { color: #888; }
.icon { width: 15px; height: 15px; flex: none; }
.icon-sm { width: 12px; height: 12px; flex: none; }
.sep { width: 1px; height: 18px; background: #c6c6c6; flex: none; }
.caret { border: 4px solid transparent; border-top: 5px solid #777; border-bottom: 0; flex: none; }
.caret-sm { border: 2px solid transparent; border-top: 3px solid #777; border-bottom: 0; margin-left: 1px; }
.caret-dark { border: 3px solid transparent; border-top: 3px solid #222; border-bottom: 0; flex: none; }
.ab-text { font: 10px "Open Sans", sans-serif; fill: #111; }
.ok-text { font: bold 7px "Open Sans", sans-serif; fill: #83a93c; }

.screen { display: flex; flex-direction: column; height: 100vh; background: #e9e9e9; }

/* top bars */
.titlebar { height: 22px; background: #fff; display: flex; align-items: center; padding-left: 3px; gap: 4px; flex: none; }
.titlebar h1 { font-weight: normal; flex: 1; white-space: nowrap; }
.window-controls { display: flex; gap: 31px; padding-right: 10px; }
.window-controls svg { width: 12px; height: 12px; }
.menubar { height: 20px; display: flex; gap: 11px; padding-left: 6px; border-bottom: 1px solid #999; flex: none; }
.toolbar { height: 29px; display: flex; align-items: center; gap: 7px; padding-left: 5px; border-bottom: 1px solid #aaa; flex: none; overflow: hidden; }
.toolbar .icon { width: 16px; height: 16px; }
.toolbar .sep { height: 22px; margin-right: -1px; }
.toolbar .user { margin-right: -4px; }
.run-config { display: flex; align-items: center; gap: 2px; width: 57px; height: 18px; border: 1px solid #999; border-radius: 2px; background: #f0f0f0; margin-right: -4px; padding: 0 3px; }
.run-config select { flex: 1; min-width: 0; }
.toolbar .run-config .icon { width: 15px; height: 15px; }
.breadcrumbs { height: 22px; display: flex; align-items: center; padding-left: 9px; gap: 2px; background: #d5d5d5; border-bottom: 1px solid #999; flex: none; }
.breadcrumbs a { display: flex; align-items: center; gap: 2px; }
.chevron { width: 8px; height: 22px; margin-right: -1px; }

.workspace { flex: 1; display: flex; min-height: 0; }

/* vertical tool stripes */
.stripe { display: flex; flex-direction: column; flex: none; overflow: hidden; }
.stripe button { flex-direction: column; gap: 3px; width: 100%; }
.stripe span { writing-mode: vertical-rl; }
.stripe-left { width: 21px; border-right: 1px solid #999; padding-bottom: 3px; }
.stripe-left button { padding: 8px 0; gap: 4px; }
.stripe-left button > span { transform: rotate(180deg); }
.stripe-left .active { background: #bdbdbd; }
.stripe-right { width: 12px; }
.stripe-right button { width: 16px; padding: 8px 0 2px; gap: 5px; }
.stripe .icon { width: 12px; height: 12px; }

/* project view */
.project { width: 309px; background: #fff; border-right: 1px solid #aaa; flex: none; }
.project-head { display: flex; justify-content: space-between; height: 21px; background: #ececec; border-bottom: 1px solid #b5b5b5; }
.view-select { display: flex; align-items: center; gap: 4px; width: 101px; padding: 0 4px 0 8px; background: #dfdfdf; border-right: 1px solid #b0b0b0; color: #555; }
.view-select select { flex: 1; min-width: 0; }
.head-tools { display: flex; align-items: center; gap: 8px; padding-right: 6px; color: #777; }
.head-tools .sep { height: 12px; }
.tree { display: grid; grid-auto-rows: 1fr; }
.tree li { display: flex; align-items: center; gap: 3px; white-space: nowrap; }
.tree .tw { width: 8px; height: 8px; flex: none; margin-right: 5px; }
.project-tree { height: 281px; margin-top: 1px; }
.project-tree .lv0 { padding-left: 3px; }
.project-tree .lv1 { padding-left: 21px; }
.project-tree .lv2 { padding-left: 40px; }
.project-tree .lv3 { padding-left: 59px; }
.tree .current { background: #d5d5d5; }

/* editor */
.editor { flex: 1; display: flex; flex-direction: column; min-width: 0; border-right: 1px solid #999; }
.file-tabs { display: flex; height: 21px; flex: none; background: #ececec; }
.file-tabs button { gap: 3px; padding: 0 6px 0 9px; background: #d4d4d4; border-right: 1px solid #999; border-bottom: 1px solid #aaa; }
.file-tabs .active { background: #fff; border-bottom-color: #fff; }
.close { width: 8px; height: 8px; margin-left: 2px; }
.designer { flex: 1; display: flex; min-height: 0; border-top: 3px solid #fff; }
.panel-head { display: flex; align-items: center; gap: 8px; height: 24px; padding: 0 6px 0 4px; border-top: 1px solid #ccc; border-bottom: 1px solid #c4c4c4; background: #e9e9e9; color: #555; flex: none; }
.panel-head h2 { flex: 1; font-weight: 500; color: #111; }
.panel-head .sep { height: 12px; }

.palette { width: 168px; display: flex; flex-direction: column; border-right: 1px solid #bbb; flex: none; }
.palette-body { flex: 1; display: flex; min-height: 0; background: #fff; }
.palette-list { flex: 1; display: grid; grid-auto-rows: 1fr; padding-bottom: 3px; min-width: 0; }
.palette-list li { display: flex; align-items: center; gap: 2px; padding-left: 12px; white-space: nowrap; min-height: 0; }
.palette-list .group { padding-left: 4px; gap: 5px; background: #ececec; font-weight: bold; }
.scrollbar { width: 9px; background: #f5f5f5; flex: none; }
.thumb { background: #e4e4e4; border: 1px solid #b5b5b5; border-radius: 2px; }
.palette-thumb { height: 128px; }

.preview { flex: 1; display: flex; flex-direction: column; min-width: 0; border-top: 1px solid #ccc; }
.config-bar, .zoom-bar { display: flex; align-items: center; flex: none; }
.config-bar { height: 26px; gap: 5px; padding-left: 4px; }
.config-bar button, .config-bar label { display: flex; align-items: center; gap: 1px; font-weight: 500; }
.zoom-bar { height: 29px; justify-content: space-between; padding: 0 5px 0 3px; border-bottom: 1px solid #bbb; }
.fit-tools, .zoom-tools { display: flex; align-items: center; gap: 6px; }
.fit-tools button { gap: 2px; }
.zoom-tools { gap: 8px; }
.zoom-tools .pressed { width: 22px; height: 22px; justify-content: center; background: #909090; border: 1px solid #666; border-radius: 2px; margin-right: -3px; }
.zoom-tools .settings { margin-left: 17px; color: #4293bf; }
.canvas-wrap { flex: 1; padding: 15px 0 0 16px; min-height: 0; }
.canvas { height: 100%; background: #979797; padding: 4px 0 0 28px; overflow: hidden; }
.phone { position: relative; width: 240px; display: flex; flex-direction: column; box-shadow: 6px 6px 6px #333; }
.phone-status { height: 15px; background: #4b4b4b; color: #c9c9c9; display: flex; align-items: center; justify-content: flex-end; gap: 4px; padding-right: 3px; font: 10px Roboto, sans-serif; }
.phone-status svg { width: 22px; height: 12px; }
.phone-appbar { height: 35px; background: #65688f; }
.phone-content { height: 320px; position: relative; display: flex; justify-content: center; padding-top: 194px; background: radial-gradient(circle at 50% -170px, #69c5ff 280px, #c5c5c5 281px); }
.phone-buttons { display: flex; flex-direction: column; gap: 6px; align-self: flex-start; background: #c9c9b6; padding: 2px; }
.phone-buttons button { width: 50px; height: 24px; justify-content: center; background: #e0e2cd; border-bottom: 1px solid #b3b58e; font: 9px Roboto, sans-serif; color: #222; }
.fab { position: absolute; right: 10px; bottom: 10px; width: 35px; height: 35px; border-radius: 50%; background: #ef3f94; justify-content: center; box-shadow: 0 1px 2px #777; }
.fab svg { width: 16px; height: 12px; }
.phone-nav { height: 30px; background: #222; display: flex; align-items: center; justify-content: space-between; padding: 0 32px; }
.phone-nav svg { width: 12px; height: 12px; fill: none; stroke: #fff; stroke-width: 1.5; }
.guides { position: absolute; left: 0; top: 0; width: 240px; height: 404px; }

/* component tree and properties */
.inspector { width: 300px; display: flex; flex-direction: column; flex: none; border-left: 1px solid #ccc; background: #fff; }
.component-body { flex: 1; }
.component-tree { height: 125px; margin-top: 1px; }
.component-tree .lv0 { padding-left: 3px; }
.component-tree .lv0 .icon { margin: 0 1px; }
.component-tree .lv1 { padding-left: 22px; }
.component-tree .lv2 { padding-left: 41px; }
.tree .selected { background: #3a70d4; color: #fff; }
.inspector .props-head { height: 25px; gap: 16px; border: 0; padding-right: 12px; }
.props-body { display: flex; height: 247px; overflow: hidden; flex: none; }
.props { flex: 1; height: 248px; border-collapse: collapse; table-layout: fixed; }
.props th, .props td { padding: 0 3px; border-bottom: 1px solid #e2e2e2; text-align: left; font-weight: normal; vertical-align: middle; height: 22px; line-height: 14px; }
.props th { width: 143px; padding-left: 20px; border-right: 1px solid #e2e2e2; }
.props .expandable th { padding-left: 4px; }
.props .tw { width: 8px; height: 8px; margin-right: 8px; }
.props input { display: block; appearance: none; width: 14px; height: 13px; border: 1px solid #555; border-radius: 2px; background: #fff; }
.props .picked { background: #d0d0d0; color: #fff; }
.props-body .scrollbar { width: 13px; padding: 151px 2px 0; }
.props-thumb { height: 27px; }

.mode-tabs { display: flex; height: 27px; padding: 0 0 0 8px; border-top: 1px solid #bbb; flex: none; }
.mode-tabs button { padding: 0 14px; margin-top: 2px; border: 1px solid #999; border-width: 1px 1px 0 0; background: #d6d6d6; }
.mode-tabs .active { background: #fff; padding: 0 5px 0 9px; }

/* bottom bars */
.tool-windows { height: 22px; display: flex; gap: 23px; padding-left: 27px; border-top: 1px solid #999; border-bottom: 1px solid #aaa; font-weight: 500; flex: none; }
.tool-windows button { gap: 2px; }
.statusbar { height: 18px; display: flex; align-items: center; gap: 8px; padding: 0 0 0 5px; flex: none; overflow: hidden; white-space: nowrap; }
.status-box { width: 13px; height: 13px; background: #c2c2c2; border: 1px solid #777; }
.statusbar .cell { color: #888; border-left: 1px solid #c5c5c5; padding-left: 6px; }
.statusbar .context { padding-right: 20px; }

.taskbar { height: 38px; display: flex; align-items: center; background: #020307; color: #fff; flex: none; }
.start { width: 45px; height: 38px; justify-content: center; }
.start svg { width: 16px; height: 16px; }
.search { width: 322px; height: 38px; background: #2f2f2f; padding-left: 12px; font-size: 14px; }
.search::placeholder { color: #aaa; }
.apps { display: flex; }
.apps button { width: 46px; height: 38px; justify-content: center; border-bottom: 3px solid transparent; border-top: 3px solid transparent; }
.apps svg { width: 20px; height: 20px; }
.apps .running { border-bottom-color: #76b9ed; }
.apps .focused { background: #303238; border-top-color: #303238; }
.tray { display: flex; align-items: center; gap: 6px; padding-right: 8px; }
.tray svg { width: 16px; height: 16px; }
.tray time { font-size: 11px; line-height: 16px; text-align: right; margin-left: 10px; }

.lesson-banner { position: absolute; right: 6px; bottom: 48px; width: 270px; height: 70px; display: flex; align-items: center; justify-content: center; padding-left: 10px; background: #338b9a; color: #fff; font: 20px "Liberation Sans", sans-serif; }
.watermark { position: absolute; right: 12px; bottom: 8px; color: rgba(200, 200, 210, 0.45); font: 34px/44px "Open Sans", sans-serif; }
```
